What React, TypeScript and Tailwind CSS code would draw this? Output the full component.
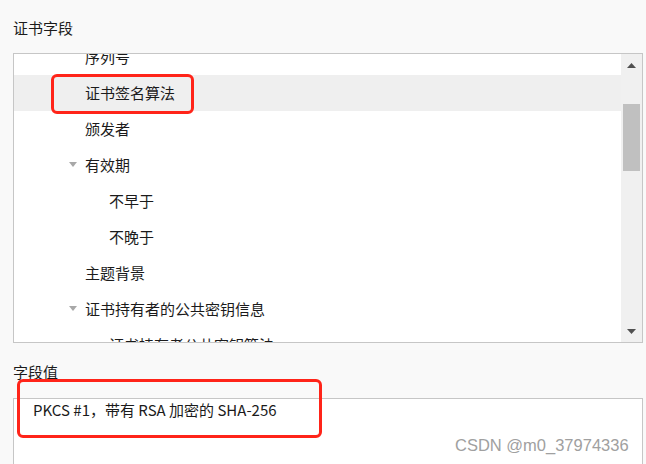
type Row = { label: string; level: 1 | 2; expander?: boolean; selected?: boolean }

const rows: Row[] = [
  { label: '序列号', level: 1 },
  { label: '证书签名算法', level: 1, selected: true },
  { label: '颁发者', level: 1 },
  { label: '有效期', level: 1, expander: true },
  { label: '不早于', level: 2 },
  { label: '不晚于', level: 2 },
  { label: '主题背景', level: 1 },
  { label: '证书持有者的公共密钥信息', level: 1, expander: true },
  { label: '证书持有者公共密钥算法', level: 2 },
]

function Caret({ dir, className }: { dir: 'up' | 'down'; className?: string }) {
  return (
    <svg width="9" height="5" viewBox="0 0 9 5" className={className}>
      {dir === 'up' ? <path d="M4.5 0 L9 5 L0 5 Z" fill="currentColor" /> : <path d="M0 0 L9 0 L4.5 5 Z" fill="currentColor" />}
    </svg>
  )
}

function TreeRow({ row }: { row: Row }) {
  return (
    <div className={`relative h-[36px] leading-[36px] ${row.selected ? 'bg-[#efefef]' : ''}`}>
      {row.expander && (
        <span className="absolute left-[55px] top-[15px] text-[#a8a8a8]">
          <svg width="8" height="5" viewBox="0 0 8 5" className="block">
            <path d="M0 0 L8 0 L4 5 Z" fill="currentColor" />
          </svg>
        </span>
      )}
      <span className={row.level === 1 ? 'pl-[71px]' : 'pl-[95px]'}>{row.label}</span>
    </div>
  )
}

export default function App() {
  return (
    <div className="relative w-[646px] h-[464px] overflow-hidden bg-[#f9f9f9] pl-[13px] text-[15px] text-[#1b1b1b] font-['Noto_Sans_CJK_SC','Microsoft_YaHei',sans-serif]">
      <div className="h-[53px] pt-[18px] leading-[20px]">证书字段</div>

      <div className="flex w-[630px] h-[290px] border border-[#c6c6c6] bg-white">
        <div className="flex-1 overflow-hidden">
          {/* list is scrolled down a little */}
          <div className="-mt-[15px]">
            {rows.map((row) => (
              <TreeRow key={row.label} row={row} />
            ))}
          </div>
        </div>
        <div className="flex w-[21px] flex-col items-center bg-[#f0f0f0] pt-[9px] pb-[8px]">
          <Caret dir="up" className="text-[#505050]" />
          <div className="mt-[36px] ml-[2px] mr-[1px] h-[67px] w-[17px] self-start bg-[#c0c0c0]" />
          <div className="flex-1" />
          <Caret dir="down" className="text-[#505050]" />
        </div>
      </div>

      <div className="h-[55px] pt-[19px] leading-[20px]">字段值</div>

      <div className="w-[630px] h-[80px] border border-[#c6c6c6] bg-white pl-[19px] pt-[1px] leading-[20px]">
        PKCS #1，带有 RSA 加密的 SHA-256
      </div>

      {/* annotations */}
      <div className="absolute left-[51px] top-[74px] w-[143px] h-[40px] rounded-[6px] border-[3px] border-[#ff2419]" />
      <div className="absolute left-[17px] top-[379px] w-[305px] h-[59px] rounded-[6px] border-[3px] border-[#ff2419]" />
      <div className="absolute left-[455px] top-[436px] text-[16.5px] leading-[18px] text-[#a0a0a0] font-['Liberation_Sans',sans-serif]">
        CSDN @m0_37974336
      </div>
    </div>
  )
}
